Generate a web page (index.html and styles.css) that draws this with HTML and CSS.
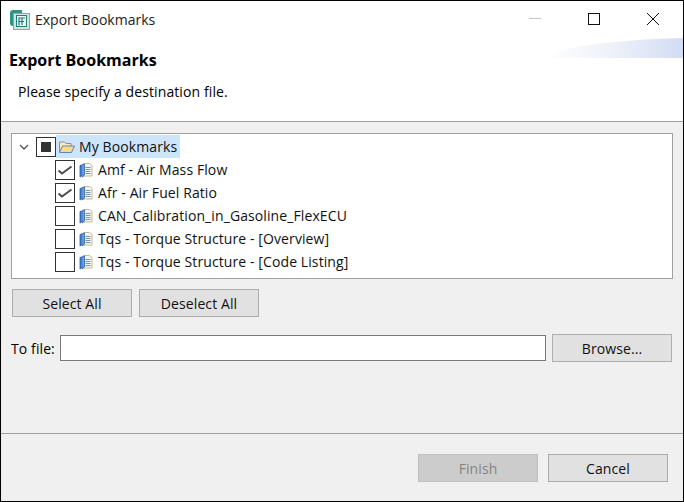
FILE: index.html
```html
<!DOCTYPE html>
<html lang="en">
<head>
<meta charset="utf-8">
<title>Export Bookmarks</title>
<link rel="stylesheet" href="styles.css">
</head>
<body>
<svg class="defs" width="0" height="0" aria-hidden="true">
  <defs>
    <linearGradient id="bookBlue" x1="0" y1="0" x2="1" y2="0"><stop offset="0" stop-color="#2f6fc0"/><stop offset="1" stop-color="#7fb0e6"/></linearGradient>
    <symbol id="book" viewBox="0 0 14 16">
      <path d="M4.500 1.500h6l2.500 2v10.500h-8.500z" fill="#f4f4f0" stroke="#c8b98c"/>
      <path d="M6.500 5.500h5M6.500 7.500h5M6.500 9.500h5M6.500 11.500h5" stroke="#7d95b5"/>
      <path d="M1 3.500l4.500-1.500v11l-1.500.5v1.500l-1.200-1-1.800 1z" fill="url(#bookBlue)" stroke="#2a62ad" stroke-width=".8"/>
    </symbol>
    <symbol id="check" viewBox="0 0 18 18">
      <path d="M2.500 9.500l3.500 3L15.500 5.500" fill="none" stroke="#484848" stroke-width="1.800"/>
    </symbol>
  </defs>
</svg>
<div class="window">
  <div class="titlebar">
    <svg class="app-icon" width="22" height="21" viewBox="0 0 22 21">
      <path d="M1 4Q1 1 4 1h9v3H7v13H4Q1 17 1 14z" fill="#2f9487"/>
      <rect x="4.500" y="4.500" width="16" height="16" fill="#cfe5e0" stroke="#8aa8a4"/>
      <rect x="7.500" y="6.500" width="10" height="11" fill="#eef7f5" stroke="#1f8074"/>
      <path d="M10 16.500V9h6M10 12.500h5M13 9v7" fill="none" stroke="#1f7a6e" stroke-width="1.200"/>
    </svg>
    <span class="window-title">Export Bookmarks</span>
    <div class="controls">
      <svg class="ctl" width="46" height="38" viewBox="0 0 46 38"><path d="M17 17.500h12" stroke="#c4c4c4"/></svg>
      <svg class="ctl" width="46" height="38" viewBox="0 0 46 38"><rect x="17.500" y="12.500" width="11" height="11" fill="none" stroke="#111"/></svg>
      <svg class="ctl" width="46" height="38" viewBox="0 0 46 38"><path d="M17 12l12 12M29 12L17 24" stroke="#111" fill="none"/></svg>
    </div>
  </div>
  <header class="banner">
    <h1 class="banner-title">Export Bookmarks</h1>
    <p class="banner-text">Please specify a destination file.</p>
    <svg class="swoosh" width="140" height="20" viewBox="0 0 140 20" aria-hidden="true">
      <defs><linearGradient id="sw" x1="0" y1="0" x2="1" y2="0"><stop offset="0" stop-color="#fff"/><stop offset=".5" stop-color="#eef1fa"/><stop offset="1" stop-color="#d2dcf3"/></linearGradient></defs>
      <path d="M0 20Q30 3 140 0V20z" fill="url(#sw)"/>
    </svg>
  </header>
  <main class="content">
    <div class="tree">
      <div class="row">
        <svg class="twisty" width="12" height="12" viewBox="0 0 12 12"><path d="M2 4l4 4 4-4" fill="none" stroke="#555" stroke-width="1.300"/></svg>
        <span class="box"><span class="mixed"></span></span>
        <span class="selected">
          <svg class="folder" width="18" height="16" viewBox="0 0 18 16"><path d="M1.500 13V3h5l1.500 1.500h5V7" fill="#fbe9b8" stroke="#7f8faa"/><path d="M1.500 13.500L4.500 7h12l-3 6.500z" fill="#fbd98a" stroke="#5f86b8"/></svg>
          <span class="label">My Bookmarks</span>
        </span>
      </div>
      <div class="row child">
        <span class="box"><svg width="18" height="18"><use href="#check"/></svg></span>
        <svg class="book" width="14" height="16"><use href="#book"/></svg>
        <span class="label">Amf - Air Mass Flow</span>
      </div>
      <div class="row child">
        <span class="box"><svg width="18" height="18"><use href="#check"/></svg></span>
        <svg class="book" width="14" height="16"><use href="#book"/></svg>
        <span class="label">Afr - Air Fuel Ratio</span>
      </div>
      <div class="row child">
        <span class="box"></span>
        <svg class="book" width="14" height="16"><use href="#book"/></svg>
        <span class="label">CAN_Calibration_in_Gasoline_FlexECU</span>
      </div>
      <div class="row child">
        <span class="box"></span>
        <svg class="book" width="14" height="16"><use href="#book"/></svg>
        <span class="label">Tqs - Torque Structure - [Overview]</span>
      </div>
      <div class="row child">
        <span class="box"></span>
        <svg class="book" width="14" height="16"><use href="#book"/></svg>
        <span class="label">Tqs - Torque Structure - [Code Listing]</span>
      </div>
    </div>
    <div class="select-actions">
      <button class="btn" type="button">Select All</button>
      <button class="btn" type="button">Deselect All</button>
    </div>
    <div class="file-row">
      <label class="file-label" for="file">To file:</label>
      <input class="file-input" id="file" type="text">
      <button class="btn" type="button">Browse...</button>
    </div>
  </main>
  <footer class="footer">
    <button class="btn disabled" type="button" disabled>Finish</button>
    <button class="btn" type="button">Cancel</button>
  </footer>
</div>
</body>
</html>
```
FILE: styles.css
```css
* { box-sizing: border-box; }
html, body { margin: 0; padding: 0; }
body {
  width: 684px;
  height: 502px;
  font-family: "Open Sans", "Noto Sans", sans-serif;
  font-size: 14px;
  letter-spacing: 0.1px;
  color: #000;
  overflow: hidden;
}
.defs { display: block; height: 0; }
.window {
  width: 684px;
  height: 502px;
  border: 1px solid #000;
  background: #f0f0f0;
  display: flex;
  flex-direction: column;
}
.titlebar {
  height: 38px;
  background: #fff;
  display: flex;
  align-items: center;
  padding-left: 8px;
  flex: none;
}
.app-icon { flex: none; margin-top: -2px; }
.window-title {
  margin-left: 4px;
  margin-top: -1px;
  color: #222;
  letter-spacing: 0;
}
.controls { margin-left: auto; display: flex; padding-right: 0; }
.ctl { display: block; margin-right: 13px; }
.ctl:last-child { margin-right: 7px; }
.banner {
  position: relative;
  height: 83px;
  background: #fff;
  border-bottom: 1px solid #a0a0a0;
  padding: 11px 8px 0;
  flex: none;
}
.banner-title {
  margin: 0;
  font-size: 16px;
  line-height: 20px;
  font-weight: 700;
  letter-spacing: 0;
}
.banner-text {
  margin: 12px 0 0 9px;
  line-height: 20px;
}
.swoosh { position: absolute; right: 0; top: -1px; }
.content {
  flex: 1;
  padding: 11px 10px 0;
  border-bottom: 1px solid #a0a0a0;
}
.tree {
  height: 146px;
  background: #fff;
  border: 1px solid #a0a0a0;
  padding-top: 1px;
}
.row {
  height: 23px;
  display: flex;
  align-items: center;
  padding-left: 6px;
}
.row.child { padding-left: 43px; }
.twisty { flex: none; margin-right: 6px; }
.box {
  flex: none;
  width: 20px;
  height: 20px;
  border: 1px solid #333;
  background: #fff;
  display: flex;
  align-items: center;
  justify-content: center;
}
.mixed { width: 10px; height: 10px; background: #333; }
.selected {
  display: flex;
  align-items: center;
  height: 23px;
  width: 124px;
  background: #cde5fb;
}
.folder { flex: none; margin: 0 3px 0 2px; }
.book { flex: none; margin: 0 5px 0 4px; }
.label {
  line-height: 23px;
  white-space: nowrap;
  color: #111;
}
.btn {
  width: 120px;
  height: 28px;
  background: #e1e1e1;
  border: 1px solid #adadad;
  font: inherit;
  letter-spacing: 0.1px;
  color: #111;
  padding: 0;
}
.btn.disabled { background: #ccc; border-color: #bfbfbf; color: #838383; }
.select-actions {
  display: flex;
  gap: 7px;
  margin: 10px 0 0 1px;
}
.file-row {
  display: flex;
  align-items: center;
  margin-top: 17px;
}
.file-label { width: 49px; }
.file-input {
  width: 486px;
  height: 26px;
  border: 1px solid #7a7a7a;
  background: #fff;
  margin-right: 6px;
}
.footer {
  flex: none;
  height: 67px;
  display: flex;
  justify-content: flex-end;
  align-items: flex-start;
  gap: 10px;
  padding: 20px 15px 0 0;
}
```
